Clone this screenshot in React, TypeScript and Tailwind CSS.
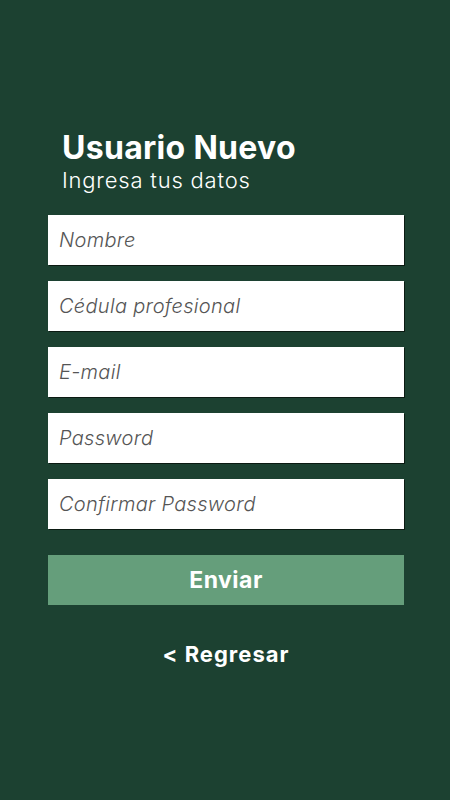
import React from "react";

const fields = ["Nombre", "Cédula profesional", "E-mail", "Password", "Confirmar Password"];

export default function App() {
  return (
    <div
      className="w-[450px] h-[800px] bg-[#1c4131] flex flex-col"
      style={{ fontFamily: "Inter, Lato, sans-serif" }}
    >
      <div className="w-[356px] ml-[48px] mt-[128px]">
        <div className="pl-[14px]">
          <h1 className="text-white text-[32px] font-bold leading-[40px] tracking-[0.3px]">Usuario Nuevo</h1>
          <p className="text-white text-[22px] font-light leading-[24px] tracking-[0.8px]">Ingresa tus datos</p>
        </div>

        <div className="mt-[23px] flex flex-col gap-4">
          {fields.map((f) => (
            <input
              key={f}
              placeholder={f}
              className="h-[50px] w-full bg-white px-[11px] text-[20px] font-light italic tracking-[0.3px] text-[#444] placeholder:text-[#555] shadow-[1px_1px_0_#0b1a12] outline-none"
            />
          ))}
        </div>

        <button className="mt-[26px] h-[50px] w-full bg-[#659e7b] text-white text-[23px] font-bold tracking-[0.5px]">
          Enviar
        </button>

        <div className="mt-[33px] text-center text-white text-[22px] font-bold tracking-[1px]">&lt; Regresar</div>
      </div>
    </div>
  );
}
